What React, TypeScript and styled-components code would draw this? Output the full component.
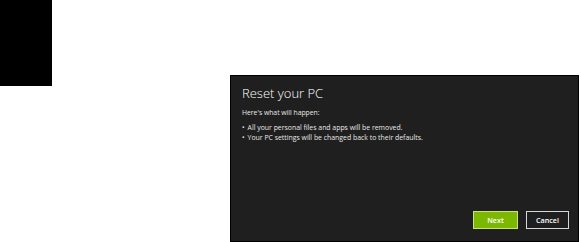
import React from "react";
import styled, { createGlobalStyle } from "styled-components";

const Global = createGlobalStyle`
  html, body { margin: 0; padding: 0; background: #ffffff; }
  body { font-family: "Open Sans", "Noto Sans", sans-serif; }
`;

const Page = styled.div`
  display: flex;
  align-items: flex-start;
  width: 581px;
  height: 242px;
  overflow: hidden;
`;

const BlackTab = styled.div`
  width: 52px;
  height: 86px;
  background: #000;
  flex: none;
`;

const Dialog = styled.div`
  flex: none;
  margin-left: 178px;
  margin-top: 75px;
  width: 349px;
  height: 167px;
  box-sizing: border-box;
  border: 1px solid #000;
  background: #1f1f1f;
  color: #ffffff;
  display: flex;
  flex-direction: column;
  padding: 8px 9px 12px 11px;
`;

const Title = styled.h1`
  margin: 0;
  font-size: 13px;
  font-weight: 300;
  line-height: 18px;
`;

const Intro = styled.p`
  margin: 6px 0 0 0;
  font-size: 6.8px;
  line-height: 10px;
  color: #e8e8e8;
`;

const List = styled.ul`
  margin: 5px 0 0 0;
  padding: 0;
  list-style: none;
`;

const Item = styled.li`
  font-size: 6.9px;
  line-height: 10px;
  color: #e8e8e8;
  &::before {
    content: "•";
    margin-right: 3px;
  }
`;

const Actions = styled.div`
  margin-top: auto;
  display: flex;
  justify-content: flex-end;
  gap: 8px;
`;

const Button = styled.button<{ $primary?: boolean }>`
  height: 18px;
  width: ${(p) => (p.$primary ? "45px" : "43px")};
  box-sizing: border-box;
  border: 1px solid ${(p) => (p.$primary ? "#c9e27a" : "#d8d8d8")};
  background: ${(p) => (p.$primary ? "#7db800" : "#1f1f1f")};
  color: #fff;
  font-family: "Open Sans", "Noto Sans", sans-serif;
  font-size: 7.2px;
  font-weight: 600;
  padding: 0;
  display: flex;
  align-items: center;
  justify-content: center;
`;

export default function App() {
  return (
    <>
      <Global />
      <Page>
        <BlackTab />
        <Dialog>
          <Title>Reset your PC</Title>
          <Intro>Here's what will happen:</Intro>
          <List>
            <Item>All your personal files and apps will be removed.</Item>
            <Item>Your PC settings will be changed back to their defaults.</Item>
          </List>
          <Actions>
            <Button $primary>Next</Button>
            <Button>Cancel</Button>
          </Actions>
        </Dialog>
      </Page>
    </>
  );
}
